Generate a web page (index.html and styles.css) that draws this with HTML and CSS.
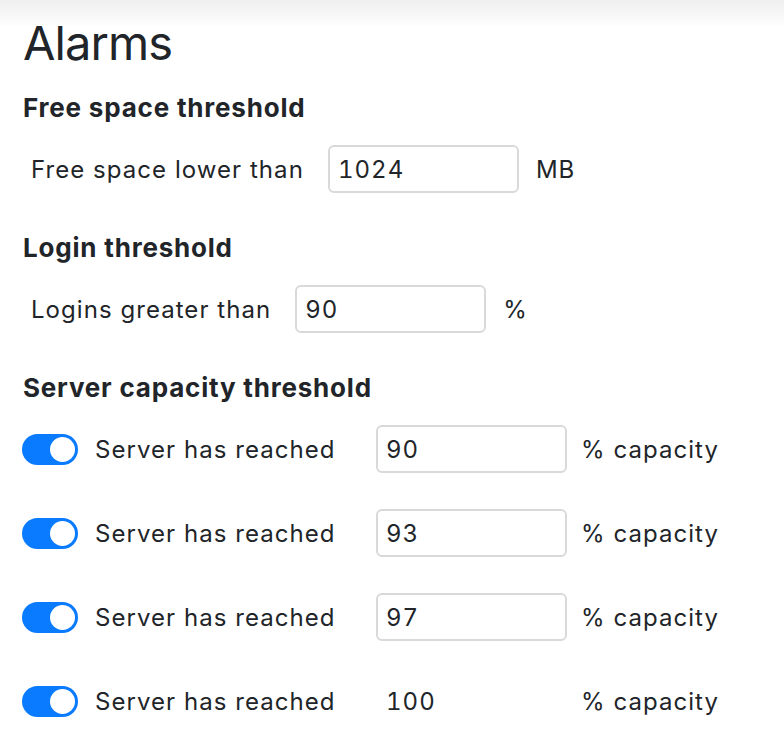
FILE: index.html
```html
<!DOCTYPE html>
<html lang="en">

<head>
    <meta charset="UTF-8">
    <meta name="viewport" content="width=device-width, initial-scale=1.0">
    <title>Alarms</title>
    <link rel="stylesheet" href="styles.css">
</head>

<body>
    <main class="alarms">
        <h2 class="title">Alarms</h2>

        <section class="group">
            <h6 class="group-title">Free space threshold</h6>
            <div class="field">
                <label for="freeSpace">Free space lower than</label>
                <input type="text" class="box" id="freeSpace" value="1024">
                <span class="unit">MB</span>
            </div>
        </section>

        <section class="group">
            <h6 class="group-title">Login threshold</h6>
            <div class="field">
                <label for="logins">Logins greater than</label>
                <input type="text" class="box" id="logins" value="90">
                <span class="unit">%</span>
            </div>
        </section>

        <section class="group">
            <h6 class="group-title">Server capacity threshold</h6>
            <div class="capacity-list">
                <div class="capacity-row">
                    <span class="switch on"><span class="knob"></span></span>
                    <label for="cap1">Server has reached</label>
                    <input type="text" class="box" id="cap1" value="90">
                    <span class="unit">% capacity</span>
                </div>
                <div class="capacity-row">
                    <span class="switch on"><span class="knob"></span></span>
                    <label for="cap2">Server has reached</label>
                    <input type="text" class="box" id="cap2" value="93">
                    <span class="unit">% capacity</span>
                </div>
                <div class="capacity-row">
                    <span class="switch on"><span class="knob"></span></span>
                    <label for="cap3">Server has reached</label>
                    <input type="text" class="box" id="cap3" value="97">
                    <span class="unit">% capacity</span>
                </div>
                <div class="capacity-row">
                    <span class="switch on"><span class="knob"></span></span>
                    <label>Server has reached</label>
                    <span class="plain">100</span>
                    <span class="unit">% capacity</span>
                </div>
            </div>
        </section>
    </main>
</body>

</html>
```

FILE: styles.css
```css
* {
    margin: 0;
    padding: 0;
    box-sizing: border-box;
}

body {
    font-family: Inter, "Noto Sans", sans-serif;
    color: #212529;
    background: #fff linear-gradient(#efefef, #fff 28px) no-repeat;
    min-height: 756px;
}

.alarms {
    padding: 15px 23px 0;
}

.title {
    font-size: 47px;
    font-weight: 400;
    line-height: 56px;
    letter-spacing: -0.9px;
}

.group {
    margin-top: 21px;
}

.group + .group {
    margin-top: 39px;
}

.group-title {
    font-size: 26px;
    font-weight: 700;
    line-height: 32px;
    letter-spacing: 0.8px;
    margin-bottom: 21px;
}

.field {
    display: flex;
    align-items: center;
    padding-left: 8px;
    gap: 24px;
    font-size: 24px;
    letter-spacing: 1.05px;
}

.field .unit {
    margin-left: -7px;
}

.box {
    width: 191px;
    height: 48px;
    padding: 0 8px;
    border: 2px solid #d9d9d9;
    border-radius: 6px;
    font: inherit;
    font-size: 24px;
    letter-spacing: 1.05px;
    font-variant-numeric: tabular-nums;
    color: #212529;
    background: #fff;
    outline: none;
}

.capacity-list {
    display: flex;
    flex-direction: column;
    gap: 36px;
}

.capacity-row {
    display: grid;
    grid-template-columns: 56px 264px 190px auto;
    column-gap: 17px;
    align-items: center;
    height: 48px;
    margin-left: -1px;
    font-size: 24px;
    letter-spacing: 1.05px;
}

.capacity-row .unit {
    margin-left: -2px;
}

.plain {
    padding-left: 10px;
    font-variant-numeric: tabular-nums;
}

.switch {
    position: relative;
    display: block;
    width: 56px;
    height: 31px;
    border-radius: 16px;
    background: #0a7bff;
}

.knob {
    position: absolute;
    top: 3px;
    right: 3px;
    width: 25px;
    height: 25px;
    border-radius: 50%;
    background: #fff;
}
```
